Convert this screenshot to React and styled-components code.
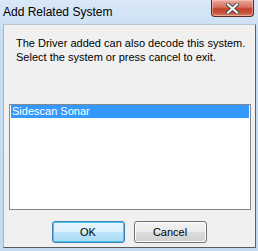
import React, { useState } from 'react';
import styled, { createGlobalStyle } from 'styled-components';

const GlobalStyle = createGlobalStyle`
  html, body {
    margin: 0;
    padding: 0;
    width: 258px;
    height: 251px;
    overflow: hidden;
    background: #c9def3;
  }
`;

const Frame = styled.div`
  width: 258px;
  height: 251px;
  box-sizing: border-box;
  display: flex;
  flex-direction: column;
  padding: 0 2px 3px 3px;
  background: linear-gradient(to bottom, #dae8f6 0px, #c6dcf2 40px, #c4daf1 100%);
  font-family: "Liberation Sans", Arial, sans-serif;
`;

const TitleBar = styled.div`
  height: 24px;
  display: flex;
  align-items: flex-start;
  justify-content: space-between;
  flex-shrink: 0;
`;

const Title = styled.div`
  padding-top: 5px;
  font-size: 12px;
  line-height: 14px;
  color: #000;
`;

const CloseButton = styled.div`
  width: 43px;
  height: 17px;
  box-sizing: border-box;
  margin-right: 2px;
  border: 1px solid #5e2b24;
  border-top: none;
  border-radius: 0 0 4px 4px;
  background: linear-gradient(to bottom, #e9a99c 0%, #d6705e 45%, #c3422b 55%, #c8513b 80%, #dd8a6d 100%);
  box-shadow: inset 0 0 0 1px rgba(255, 220, 210, 0.45);
  display: flex;
  align-items: center;
  justify-content: center;
`;

const Panel = styled.div`
  flex: 1;
  min-height: 0;
  box-sizing: border-box;
  background: #f0f0f0;
  border: 1px solid;
  border-color: #b9c6d2 #616161 #5a5a5a #a9b6c2;
  display: flex;
  flex-direction: column;
  padding: 11px 4px 0 5px;
`;

const Message = styled.p`
  margin: 0 0 0 7px;
  font-size: 11px;
  line-height: 14px;
  white-space: nowrap;
  color: #000;
`;

const ListBox = styled.div`
  margin-top: 40px;
  height: 106px;
  flex-shrink: 0;
  box-sizing: border-box;
  border: 1px solid #828790;
  background: #fff;
  padding: 0 1px;
`;

const ListItem = styled.div`
  height: 13px;
  line-height: 13px;
  padding-left: 1px;
  font-size: 11px;
  color: ${p => (p.$selected ? '#fff' : '#000')};
  background: ${p => (p.$selected ? '#3399ff' : 'transparent')};
  cursor: default;
`;

const ButtonRow = styled.div`
  display: flex;
  justify-content: center;
  gap: 9px;
  margin-top: 11px;
  padding-right: 2px;
`;

const Button = styled.button`
  width: 73px;
  height: 22px;
  box-sizing: border-box;
  padding: 0;
  font-family: "Liberation Sans", Arial, sans-serif;
  font-size: 11px;
  color: #000;
  border-radius: 3px;
  border: 1px solid ${p => (p.$default ? '#3c7fb1' : '#707070')};
  background: ${p =>
    p.$default
      ? 'linear-gradient(to bottom, #eaf6fd 0%, #d9f0fc 50%, #bee6fd 50%, #a7d9f5 100%)'
      : 'linear-gradient(to bottom, #f2f2f2 0%, #ebebeb 50%, #dddddd 50%, #cfcfcf 100%)'};
  box-shadow: inset 0 0 0 1px ${p => (p.$default ? '#48c6f4' : '#fcfcfc')};
`;

const items = ['Sidescan Sonar'];

const App = () => {
  const [selected, setSelected] = useState(0);
  return (
    <>
      <GlobalStyle />
      <Frame>
        <TitleBar>
          <Title>Add Related System</Title>
          <CloseButton>
            <svg width="13" height="11" viewBox="0 0 13 11">
              <path d="M2 1.5 L11 9.5 M11 1.5 L2 9.5" stroke="#4a4a4a" strokeWidth="4" strokeLinecap="square" />
              <path d="M2 1.5 L11 9.5 M11 1.5 L2 9.5" stroke="#ffffff" strokeWidth="2" strokeLinecap="square" />
            </svg>
          </CloseButton>
        </TitleBar>
        <Panel>
          <Message>
            The Driver added can also decode this system.
            <br />
            Select the system or press cancel to exit.
          </Message>
          <ListBox>
            {items.map((name, i) => (
              <ListItem key={name} $selected={selected === i} onClick={() => setSelected(i)}>
                {name}
              </ListItem>
            ))}
          </ListBox>
          <ButtonRow>
            <Button $default>OK</Button>
            <Button>Cancel</Button>
          </ButtonRow>
        </Panel>
      </Frame>
    </>
  );
};

export default App;
